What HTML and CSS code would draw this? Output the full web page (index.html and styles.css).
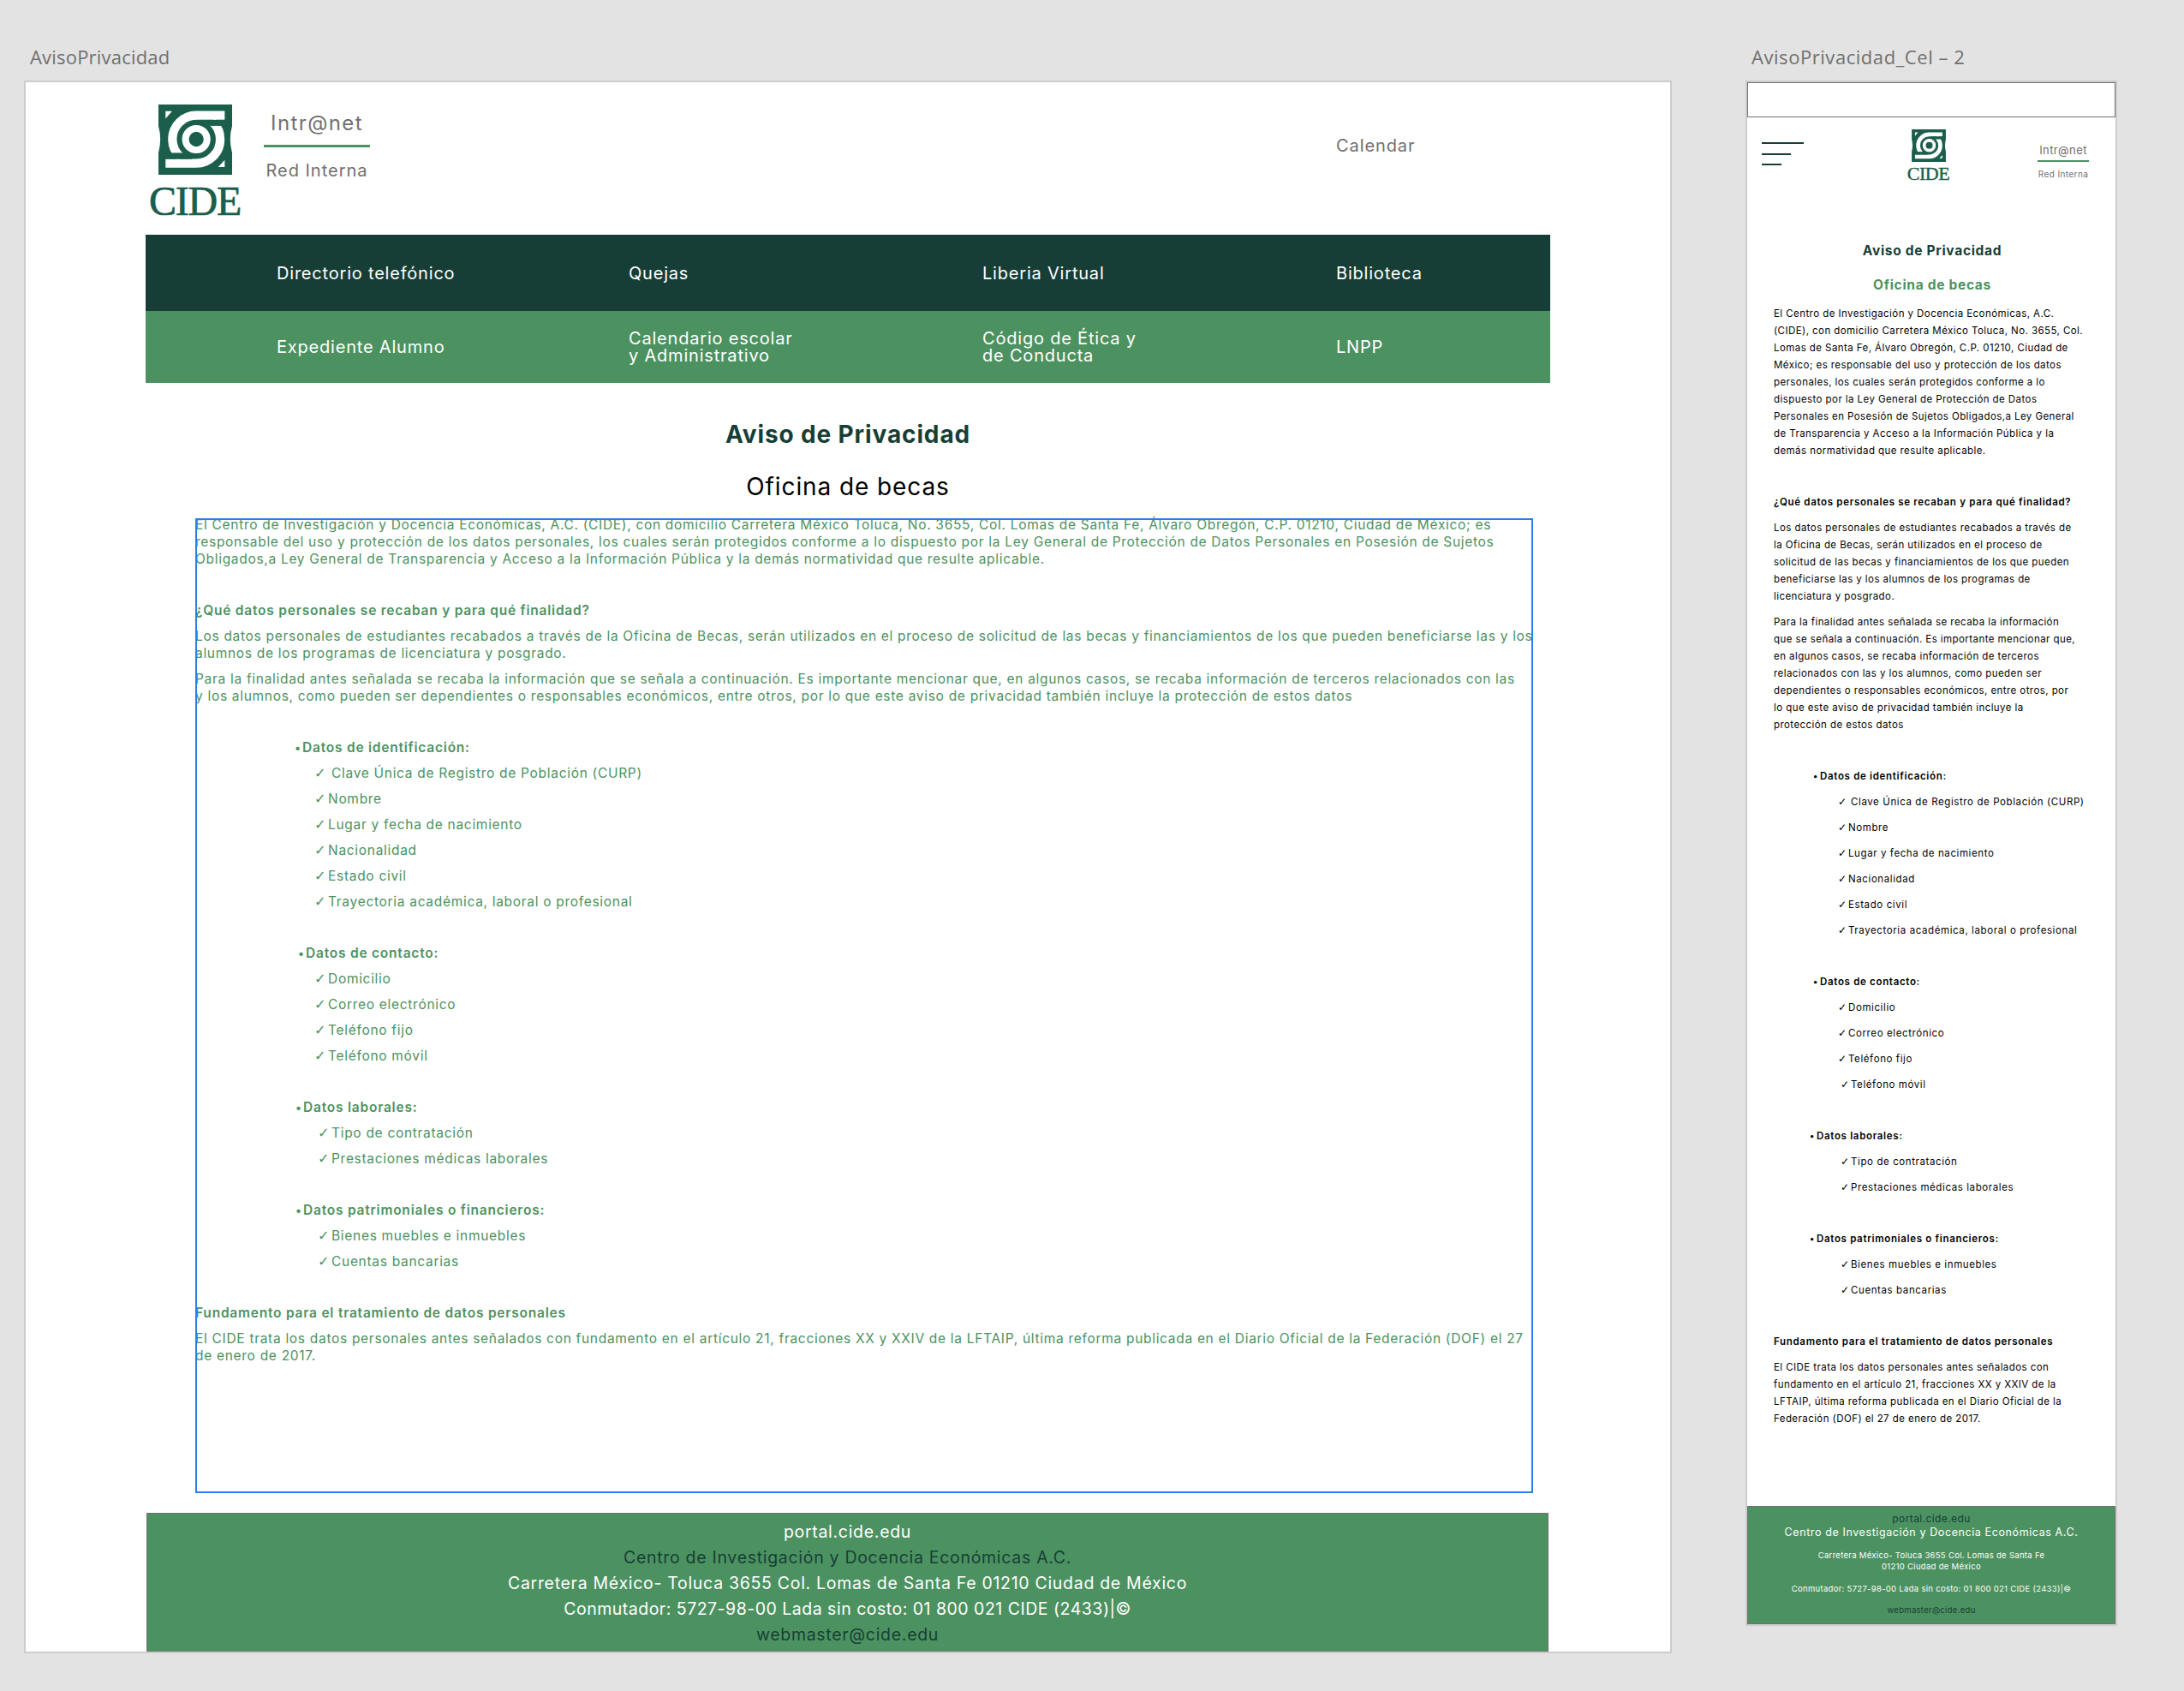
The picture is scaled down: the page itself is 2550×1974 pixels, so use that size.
FILE: index.html
```html
<!DOCTYPE html>
<html lang="es">
<head>
<meta charset="utf-8">
<title>AvisoPrivacidad</title>
<link rel="stylesheet" href="styles.css">
</head>
<body>
<svg class="defs" width="0" height="0" aria-hidden="true">
  <symbol id="cide-mark" viewBox="72 35 259 247">
    <rect x="72" y="35" width="259" height="247" fill="#1b5e4b"/>
    <path d="M72 110Q85 157 72 205ZM331 110Q318 157 331 205ZM97 58H120L97 85ZM305 255H282L305 230Z" fill="#fff"/>
    <path d="M305 73H205A84 84 0 0 0 121 157A84 84 0 0 0 150 220" fill="none" stroke="#fff" stroke-width="31"/>
    <path d="M97 242H205A84 84 0 0 0 289 157A84 84 0 0 0 260 94" fill="none" stroke="#fff" stroke-width="31"/>
    <rect x="90" y="205" width="100" height="22" fill="#1b5e4b"/>
    <rect x="220" y="89" width="100" height="21" fill="#1b5e4b"/>
    <circle cx="205" cy="157" r="38" fill="none" stroke="#fff" stroke-width="24"/>
  </symbol>
</svg>

<div class="board">
  <section class="art art--web">
    <h2 class="art-label">AvisoPrivacidad</h2>
    <div class="frame frame--web">
      <header class="head">
        <div class="logo">
          <svg class="logo-mark"><use href="#cide-mark"/></svg>
          <span class="logo-word">CIDE</span>
        </div>
        <div class="intra">
          <span class="intra-name">Intr@net</span>
          <span class="intra-sub">Red Interna</span>
        </div>
        <span class="calendar">Calendar</span>
      </header>

      <div class="sheet">
        <nav class="nav nav--dark">
          <a>Directorio telefónico</a>
          <a>Quejas</a>
          <a>Liberia Virtual</a>
          <a>Biblioteca</a>
        </nav>
        <nav class="nav nav--green">
          <a>Expediente Alumno</a>
          <a>Calendario escolar<br>y Administrativo</a>
          <a>Código de Ética y<br>de Conducta</a>
          <a>LNPP</a>
        </nav>

        <h1 class="title">Aviso de Privacidad</h1>
        <h2 class="subtitle">Oficina de becas</h2>

        <article class="doc doc--web">
          <p>El Centro de Investigación y Docencia Económicas, A.C. (CIDE), con domicilio Carretera México Toluca, No. 3655, Col. Lomas de Santa Fe, Álvaro Obregón, C.P. 01210, Ciudad de México; es<br>responsable del uso y protección de los datos personales, los cuales serán protegidos conforme a lo dispuesto por la Ley General de Protección de Datos Personales en Posesión de Sujetos<br>Obligados,a Ley General de Transparencia y Acceso a la Información Pública y la demás normatividad que resulte aplicable.</p>
          <p class="sect b">¿Qué datos personales se recaban y para qué finalidad?</p>
          <p>Los datos personales de estudiantes recabados a través de la Oficina de Becas, serán utilizados en el proceso de solicitud de las becas y financiamientos de los que pueden beneficiarse las y los<br>alumnos de los programas de licenciatura y posgrado.</p>
          <p>Para la finalidad antes señalada se recaba la información que se señala a continuación. Es importante mencionar que, en algunos casos, se recaba información de terceros relacionados con las<br>y los alumnos, como pueden ser dependientes o responsables económicos, entre otros, por lo que este aviso de privacidad también incluye la protección de estos datos</p>

          <p class="sect b g1"><span class="dot">•</span>Datos de identificación:</p>
          <p class="i1"><span class="chk chk--wide">✓</span>Clave Única de Registro de Población (CURP)</p>
          <p class="i1"><span class="chk">✓</span>Nombre</p>
          <p class="i1"><span class="chk">✓</span>Lugar y fecha de nacimiento</p>
          <p class="i1"><span class="chk">✓</span>Nacionalidad</p>
          <p class="i1"><span class="chk">✓</span>Estado civil</p>
          <p class="i1"><span class="chk">✓</span>Trayectoria académica, laboral o profesional</p>

          <p class="sect b g2"><span class="dot">•</span>Datos de contacto:</p>
          <p class="i1"><span class="chk">✓</span>Domicilio</p>
          <p class="i1"><span class="chk">✓</span>Correo electrónico</p>
          <p class="i1"><span class="chk">✓</span>Teléfono fijo</p>
          <p class="i1"><span class="chk">✓</span>Teléfono móvil</p>

          <p class="sect b g3"><span class="dot">•</span>Datos laborales:</p>
          <p class="i2"><span class="chk">✓</span>Tipo de contratación</p>
          <p class="i2"><span class="chk">✓</span>Prestaciones médicas laborales</p>

          <p class="sect b g3"><span class="dot">•</span>Datos patrimoniales o financieros:</p>
          <p class="i2"><span class="chk">✓</span>Bienes muebles e inmuebles</p>
          <p class="i2"><span class="chk">✓</span>Cuentas bancarias</p>

          <p class="sect b">Fundamento para el tratamiento de datos personales</p>
          <p>El CIDE trata los datos personales antes señalados con fundamento en el artículo 21, fracciones XX y XXIV de la LFTAIP, última reforma publicada en el Diario Oficial de la Federación (DOF) el 27<br>de enero de 2017.</p>
        </article>

        <footer class="foot foot--web">
          <span>portal.cide.edu</span>
          <span class="ink">Centro de Investigación y Docencia Económicas A.C.</span>
          <span>Carretera México- Toluca 3655 Col. Lomas de Santa Fe 01210 Ciudad de México</span>
          <span class="foot-tel">Conmutador: 5727-98-00 Lada sin costo: 01 800 021 CIDE (2433)|©</span>
          <span class="ink">webmaster@cide.edu</span>
        </footer>
      </div>
    </div>
  </section>

  <section class="art art--cel">
    <h2 class="art-label">AvisoPrivacidad_Cel – 2</h2>
    <div class="frame frame--cel">
      <div class="cel-bar"></div>
      <header class="cel-head">
        <div class="burger"><i class="l1"></i><i class="l2"></i><i class="l3"></i></div>
        <div class="cel-logo">
          <svg class="cel-mark"><use href="#cide-mark"/></svg>
          <span class="cel-word">CIDE</span>
        </div>
        <div class="cel-intra">
          <span class="cel-name">Intr@net</span>
          <span class="cel-sub">Red Interna</span>
        </div>
      </header>

      <h1 class="cel-title">Aviso de Privacidad</h1>
      <h2 class="cel-subtitle">Oficina de becas</h2>

      <article class="doc doc--cel">
        <p>El Centro de Investigación y Docencia Económicas, A.C.<br>(CIDE), con domicilio Carretera México Toluca, No. 3655, Col.<br>Lomas de Santa Fe, Álvaro Obregón, C.P. 01210, Ciudad de<br>México; es responsable del uso y protección de los datos<br>personales, los cuales serán protegidos conforme a lo<br>dispuesto por la Ley General de Protección de Datos<br>Personales en Posesión de Sujetos Obligados,a Ley General<br>de Transparencia y Acceso a la Información Pública y la<br>demás normatividad que resulte aplicable.</p>
        <p class="sect b">¿Qué datos personales se recaban y para qué finalidad?</p>
        <p>Los datos personales de estudiantes recabados a través de<br>la Oficina de Becas, serán utilizados en el proceso de<br>solicitud de las becas y financiamientos de los que pueden<br>beneficiarse las y los alumnos de los programas de<br>licenciatura y posgrado.</p>
        <p>Para la finalidad antes señalada se recaba la información<br>que se señala a continuación. Es importante mencionar que,<br>en algunos casos, se recaba información de terceros<br>relacionados con las y los alumnos, como pueden ser<br>dependientes o responsables económicos, entre otros, por<br>lo que este aviso de privacidad también incluye la<br>protección de estos datos</p>

        <p class="sect b g1"><span class="dot">•</span>Datos de identificación:</p>
        <p class="i1"><span class="chk chk--wide">✓</span>Clave Única de Registro de Población (CURP)</p>
        <p class="i1"><span class="chk">✓</span>Nombre</p>
        <p class="i1"><span class="chk">✓</span>Lugar y fecha de nacimiento</p>
        <p class="i1"><span class="chk">✓</span>Nacionalidad</p>
        <p class="i1"><span class="chk">✓</span>Estado civil</p>
        <p class="i1"><span class="chk">✓</span>Trayectoria académica, laboral o profesional</p>

        <p class="sect b g2"><span class="dot">•</span>Datos de contacto:</p>
        <p class="i1"><span class="chk">✓</span>Domicilio</p>
        <p class="i1"><span class="chk">✓</span>Correo electrónico</p>
        <p class="i1"><span class="chk">✓</span>Teléfono fijo</p>
        <p class="i2"><span class="chk">✓</span>Teléfono móvil</p>

        <p class="sect b g3"><span class="dot">•</span>Datos laborales:</p>
        <p class="i2"><span class="chk">✓</span>Tipo de contratación</p>
        <p class="i2"><span class="chk">✓</span>Prestaciones médicas laborales</p>

        <p class="sect b g3"><span class="dot">•</span>Datos patrimoniales o financieros:</p>
        <p class="i2"><span class="chk">✓</span>Bienes muebles e inmuebles</p>
        <p class="i2"><span class="chk">✓</span>Cuentas bancarias</p>

        <p class="sect b">Fundamento para el tratamiento de datos personales</p>
        <p>El CIDE trata los datos personales antes señalados con<br>fundamento en el artículo 21, fracciones XX y XXIV de la<br>LFTAIP, última reforma publicada en el Diario Oficial de la<br>Federación (DOF) el 27 de enero de 2017.</p>
      </article>

      <footer class="foot--cel">
        <span class="cf-portal">portal.cide.edu</span>
        <span class="cf-centro">Centro de Investigación y Docencia Económicas A.C.</span>
        <span class="cf-addr">Carretera México- Toluca 3655 Col. Lomas de Santa Fe<br>01210 Ciudad de México</span>
        <span class="cf-tel">Conmutador: 5727-98-00 Lada sin costo: 01 800 021 CIDE (2433)|©</span>
        <span class="cf-mail">webmaster@cide.edu</span>
      </footer>
    </div>
  </section>
</div>
</body>
</html>
```

FILE: styles.css
```css
* { box-sizing: border-box; }
html, body { margin: 0; padding: 0; }
body {
  width: 2550px;
  height: 1974px;
  overflow: hidden;
  background: #e3e3e3;
  font-family: Inter, "Noto Sans", sans-serif;
  color: #4c9261;
}
.defs { position: absolute; }
h1, h2, p { margin: 0; font-weight: 400; }

.board { display: flex; align-items: flex-start; padding-left: 28px; gap: 86px; }
.art { display: flex; flex-direction: column; }
.art-label {
  height: 94px;
  padding-top: 51px;
  padding-left: 7px;
  font: 400 22px/30px "Open Sans", sans-serif;
  color: #707070;
  letter-spacing: .2px;
}
.art--cel .art-label { letter-spacing: .55px; }

.frame { background: #fff; border: 2px solid #ccc; }
.frame--web { width: 1924px; height: 1836px; }
.frame--cel { width: 434px; height: 1804px; display: flex; flex-direction: column; }

/* desktop header */
.head { display: flex; height: 178px; padding-left: 144px; }
.logo { width: 107px; display: flex; flex-direction: column; align-items: center; padding-top: 26px; }
.logo-mark { width: 86px; height: 82px; display: block; }
.logo-word {
  font: 400 48px/40px "Liberation Serif", serif;
  letter-spacing: -1.2px;
  color: #1b5e4b;
  -webkit-text-stroke: 0.7px #1b5e4b;
  margin-top: 11px;
}
.intra { width: 124px; margin-left: 27px; display: flex; flex-direction: column; align-items: center; padding-top: 33px; color: #707070; }
.intra-name { width: 100%; height: 43px; line-height: 30px; font-size: 24px; text-align: center; border-bottom: 3px solid #4c9261; letter-spacing: 1.4px; }
.intra-sub { line-height: 24px; font-size: 20px; margin-top: 15px; letter-spacing: 1px; white-space: nowrap; }
.calendar { margin-left: 1128px; margin-top: 62px; line-height: 24px; font-size: 20px; color: #707070; letter-spacing: .9px; }

/* desktop body */
.sheet { margin-left: 140px; width: 1640px; }
.nav { display: grid; grid-template-columns: 411px 413px 413px 1fr; padding-left: 153px; align-items: center; color: #fff; font-size: 20px; line-height: 20px; letter-spacing: .8px; }
.nav--dark { background: #173e36; height: 89px; }
.nav--green { background: #4c9261; height: 84px; }

.title { margin-top: 43px; text-align: center; font-size: 28px; font-weight: 700; line-height: 34px; color: #173e36; letter-spacing: .87px; }
.subtitle { margin-top: 27px; text-align: center; font-size: 28px; line-height: 34px; color: #000; letter-spacing: .9px; }

.doc p { line-height: 20px; margin-bottom: 10px; white-space: nowrap; }
.doc .sect { margin-top: 40px; }
.doc .b { font-weight: 600; }
.dot, .chk { display: inline-block; line-height: 1; }
.dot { font-size: .9em; }
.chk { font-family: "DejaVu Sans", sans-serif; font-size: 1.05em; letter-spacing: 0; }

.doc--web {
  margin-left: 58px;
  width: 1562px;
  height: 1138px;
  margin-top: 20px;
  padding-top: 1px;
  outline: 2px solid #2680eb;
  outline-offset: -2px;
  font-size: 15.5px;
  letter-spacing: .7px;
}
.doc--web > p:first-child { margin-top: -3px; }
.doc--web .b { letter-spacing: .78px; }
.doc--web .g1 { margin-left: 116px; }
.doc--web .g2 { margin-left: 120px; }
.doc--web .g3 { margin-left: 117px; }
.doc--web .i1 { margin-left: 139px; }
.doc--web .i2 { margin-left: 143px; }
.doc--web .dot { width: 9px; }
.doc--web .chk { width: 16px; }
.doc--web .chk--wide { width: 20px; }

.foot { display: flex; flex-direction: column; align-items: center; text-align: center; }
.foot--web {
  margin-top: 23px;
  margin-left: 1px;
  width: 1637px;
  height: 162px;
  padding-top: 6px;
  background: #4c9261;
  border: 1px solid #707070;
  color: #fff;
  font-size: 19.5px;
  line-height: 30px;
  letter-spacing: .7px;
}
.foot-tel { letter-spacing: .5px; }
.ink { color: #173e36; }

/* phone */
.cel-bar { height: 41px; border: 1px solid #707070; }
.cel-head { height: 146px; display: flex; }
.burger { margin: 29px 0 0 17px; width: 49px; display: flex; flex-direction: column; gap: 10.5px; }
.burger i { display: block; height: 2px; background: #173e36; }
.burger .l1 { width: 49px; }
.burger .l2 { width: 34px; }
.burger .l3 { width: 23px; }
.cel-logo { width: 49px; margin-left: 121px; display: flex; flex-direction: column; align-items: center; padding-top: 14px; }
.cel-mark { width: 40px; height: 38px; display: block; }
.cel-word { font: 400 22px/20px "Liberation Serif", serif; letter-spacing: -.5px; color: #1b5e4b; -webkit-text-stroke: .4px #1b5e4b; margin-top: 4px; }
.cel-intra { width: 60px; margin-left: 103px; display: flex; flex-direction: column; align-items: center; padding-top: 28px; color: #707070; }
.cel-name { width: 100%; height: 24px; line-height: 20px; font-size: 13px; text-align: center; border-bottom: 2px solid #4c9261; letter-spacing: .4px; }
.cel-sub { font-size: 10px; line-height: 14px; margin-top: 7px; letter-spacing: .4px; white-space: nowrap; }

.cel-title { text-align: center; font-size: 15.5px; font-weight: 700; line-height: 20px; color: #173e36; letter-spacing: .7px; margin-right: -2px; }
.cel-subtitle { margin-top: 20px; text-align: center; font-size: 15.5px; font-weight: 700; line-height: 20px; color: #4c9261; letter-spacing: .7px; margin-right: -2px; }

.doc--cel { margin-top: 13px; padding-left: 31px; font-size: 11.5px; letter-spacing: .43px; color: #000; }
.doc--cel .b { letter-spacing: .68px; }
.doc--cel .g1, .doc--cel .g2 { margin-left: 46px; }
.doc--cel .g3 { margin-left: 42px; }
.doc--cel .i1 { margin-left: 75px; letter-spacing: .6px; }
.doc--cel .i2 { margin-left: 78px; letter-spacing: .6px; }
.doc--cel .dot { width: 8px; }
.doc--cel .chk { width: 12px; letter-spacing: 0; }
.doc--cel .chk--wide { width: 15px; }
.doc--cel p:last-child { margin-bottom: 0; }

.foot--cel {
  margin-top: auto;
  height: 138px;
  background: #4c9261;
  border: 1px solid #707070;
  color: #fff;
  display: flex;
  flex-direction: column;
  align-items: center;
  text-align: center;
  padding-top: 6px;
  font-size: 9.5px;
  letter-spacing: .3px;
}
.cf-portal { font-size: 12px; line-height: 16px; color: #173e36; letter-spacing: .4px; }
.cf-centro { font-size: 12.5px; line-height: 16px; letter-spacing: .6px; }
.cf-addr { line-height: 13px; margin-top: 12px; }
.cf-tel { line-height: 13px; margin-top: 13px; }
.cf-mail { line-height: 13px; margin-top: 12px; color: #173e36; }
```
